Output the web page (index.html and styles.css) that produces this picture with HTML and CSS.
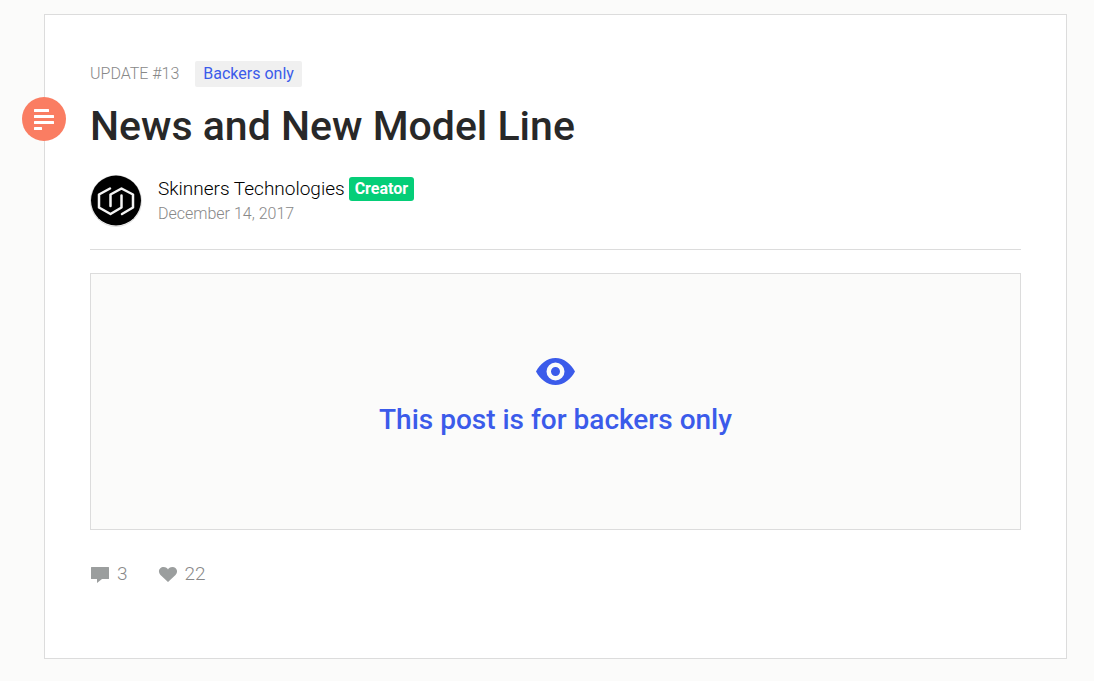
FILE: index.html
```html
<!DOCTYPE html>
<html lang="en">
<head>
  <meta charset="utf-8">
  <meta name="viewport" content="width=device-width, initial-scale=1">
  <title>News and New Model Line</title>
  <link rel="stylesheet" href="styles.css">
</head>
<body>
  <article class="post">
    <span class="post-type">
      <svg viewBox="0 0 20 21" width="20" height="21" fill="#fff" aria-hidden="true">
        <rect width="15" height="3" rx=".5"/><rect y="6" width="20" height="3" rx=".5"/><rect y="12" width="20" height="3" rx=".5"/><rect y="18" width="8" height="3" rx=".5"/>
      </svg>
    </span>
    <header class="post-header">
      <div class="meta">
        <span class="update">UPDATE #13</span>
        <span class="access">Backers only</span>
      </div>
      <h1 class="title">News and New Model Line</h1>
      <div class="author">
        <svg class="avatar" viewBox="0 0 52 52" aria-hidden="true">
          <circle cx="26" cy="26" r="25.500" fill="#fff" stroke="#ddd"/>
          <circle cx="26" cy="25.500" r="25" fill="#000"/>
          <g fill="none" stroke="#f4f4f4" stroke-width="2.500" stroke-linejoin="round" stroke-linecap="round">
            <path d="M20 13.500 9 19.500v13l11.500 6.500 11-6.500V20.500"/>
            <path d="M20.500 31V19.500L31.500 13.500 43 19.500v13L32 39"/>
          </g>
        </svg>
        <div class="byline">
          <div class="name-row">
            <span class="name">Skinners Technologies</span>
            <span class="role">Creator</span>
          </div>
          <time class="date" datetime="2017-12-14">December 14, 2017</time>
        </div>
      </div>
    </header>
    <a class="locked" href="#">
      <svg viewBox="0 0 39 27" width="39" height="27" aria-hidden="true">
        <path fill="#3b5bea" fill-rule="evenodd" d="M0 13.500C4 6 11 0 19.500 0S35 6 39 13.500C35 21 28 27 19.500 27S4 21 0 13.500ZM19.500 4.500a9 9 0 1 0 0 18 9 9 0 0 0 0-18Zm0 4.500a4.500 4.500 0 1 1 0 9 4.500 4.500 0 0 1 0-9Z"/>
      </svg>
      <span class="locked-text">This post is for backers only</span>
    </a>
    <footer class="stats">
      <a class="stat" href="#" aria-label="3 comments">
        <svg viewBox="0 0 19 20" width="19" height="20" fill="#9b9e9e" aria-hidden="true"><path d="M1.500 3h17q.5 0 .5.500v11q0 .5-.5.500H12l-5 4v-4H1.500q-.5 0-.5-.5v-11q0-.5.500-.5Z"/></svg>
        <span>3</span>
      </a>
      <a class="stat" href="#" aria-label="22 likes">
        <svg viewBox="0 0 19 20" width="19" height="20" fill="#9b9e9e" aria-hidden="true"><path d="M10 18 2.500 11C-1 7 2 3 5.500 3 8 3 9.300 4.300 10 5.500 10.700 4.300 12 3 14.500 3 18 3 21 7 17.500 11Z"/></svg>
        <span>22</span>
      </a>
    </footer>
  </article>
</body>
</html>
```
FILE: styles.css
```css
* {
  box-sizing: border-box;
}

body {
  margin: 0;
  padding: 14px 27px 22px 44px;
  background: #fbfbfa;
  color: #282828;
  font-family: Roboto, "Liberation Sans", sans-serif;
  font-weight: 300;
}

a {
  color: inherit;
  text-decoration: none;
}

svg {
  display: block;
  flex: none;
}

.post {
  position: relative;
  padding: 46px 45px 72px;
  border: 1px solid #dcdcdc;
  background: #fff;
}

.post-type {
  position: absolute;
  top: 82px;
  left: -23px;
  display: flex;
  align-items: center;
  padding-left: 12px;
  width: 44px;
  height: 44px;
  border-radius: 50%;
  background: #fa7d62;
}

.post-header {
  padding-bottom: 22px;
  border-bottom: 1px solid #dcdcdc;
}

.meta {
  display: flex;
  align-items: center;
  gap: 16px;
  font-size: 16px;
  line-height: 26px;
}

.update,
.date {
  color: #888;
}

.access {
  padding: 0 8px;
  border-radius: 2px;
  background: #f0f0f0;
  color: #3b5bea;
  font-weight: 400;
}

.title {
  margin: 15px 0 25px;
  font-size: 41px;
  line-height: 48px;
  font-weight: 500;
}

.author {
  display: flex;
  gap: 16px;
}

.avatar {
  width: 52px;
  height: 52px;
}

.byline {
  display: flex;
  flex-direction: column;
}

.name-row {
  display: flex;
  align-items: flex-end;
  gap: 4px;
  padding-top: 2px;
}

.name {
  color: #000;
  font-size: 19px;
  line-height: 24px;
}

.role {
  padding: 0 6px;
  border-radius: 3px;
  background: #05ce78;
  color: #fff;
  font-size: 16px;
  line-height: 24px;
  font-weight: 700;
}

.date {
  font-size: 16px;
  line-height: 26px;
}

.locked {
  display: flex;
  flex-direction: column;
  align-items: center;
  gap: 16px;
  margin-top: 23px;
  padding: 84px 20px 91px;
  border: 1px solid #dcdcdc;
  background: #fbfbfa;
}

.locked-text {
  color: #3b5bea;
  font-size: 28px;
  line-height: 37px;
  font-weight: 500;
}

.stats {
  display: flex;
  gap: 30px;
  margin-top: 32px;
  color: #888;
  font-size: 19px;
  line-height: 24px;
}

.stat {
  display: flex;
  align-items: center;
  gap: 8px;
}
```
